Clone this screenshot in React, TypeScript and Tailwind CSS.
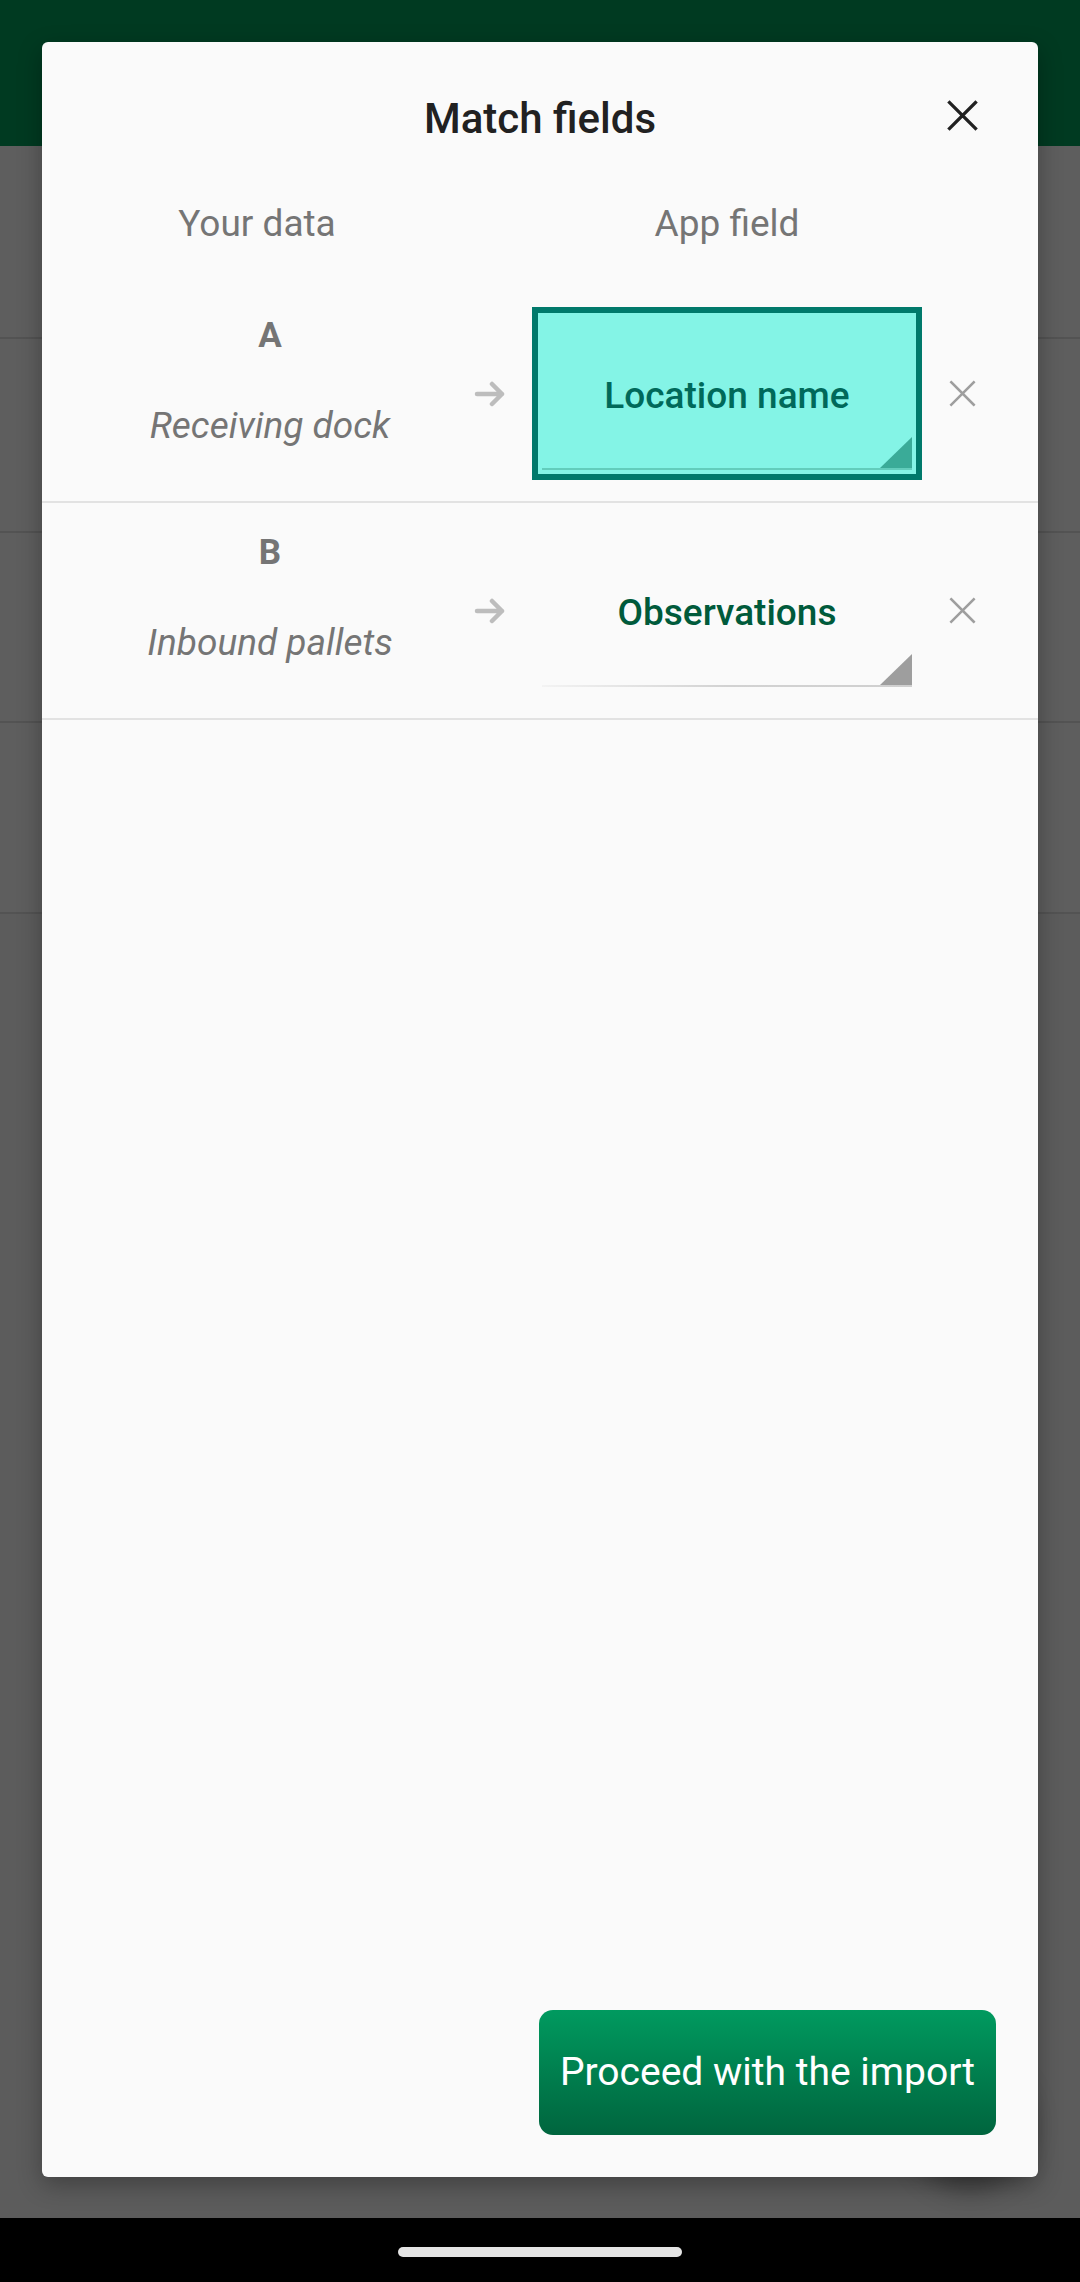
import React from "react";

const rows = [
  { letter: "A", sample: "Receiving dock", field: "Location name", focused: true },
  { letter: "B", sample: "Inbound pallets", field: "Observations", focused: false },
];

function CloseIcon({ className, strokeWidth }: { className: string; strokeWidth: number }) {
  return (
    <svg className={className} viewBox="0 0 24 24" fill="none" stroke="currentColor" strokeWidth={strokeWidth}>
      <path strokeLinecap="square" d="M2 2L22 22M22 2L2 22" />
    </svg>
  );
}

function ArrowIcon() {
  return (
    <svg className="w-[32px] h-[26px] text-[#bdbdbd]" viewBox="0 0 32 26" fill="none" stroke="currentColor" strokeWidth={4.5}>
      <path strokeLinecap="round" strokeLinejoin="round" d="M3 13H28M18 3L28 13L18 23" />
    </svg>
  );
}

function FieldSelect({ label, focused }: { label: string; focused: boolean }) {
  return (
    <div
      className={
        focused
          ? "relative w-[390px] h-[173px] border-[6px] border-[#00796b] bg-[#84f4e6] flex items-center justify-center"
          : "relative w-[390px] h-[173px] border-[6px] border-transparent flex items-center justify-center"
      }
    >
      <span
        className={
          focused
            ? "mt-[3px] text-[37px] font-medium text-[#00695a] leading-none"
            : "mt-[3px] text-[37px] font-medium text-[#005a3b] leading-none"
        }
      >
        {label}
      </span>
      <div
        className={
          focused
            ? "absolute left-[4px] right-[4px] bottom-[4px] h-[2px] bg-[#62cdbc]"
            : "absolute left-[4px] right-[4px] bottom-[4px] h-[2px] bg-gradient-to-r from-[#f3f3f3] via-[#d2d2d2] to-[#cfcfcf]"
        }
      />
      <svg className="absolute right-[4px] bottom-[6px] w-[32px] h-[31px]" viewBox="0 0 32 31">
        <polygon points="32,0 32,31 0,31" fill={focused ? "#3aab98" : "#9e9e9e"} />
      </svg>
    </div>
  );
}

export default function App() {
  return (
    <div
      className="relative w-[1080px] h-[2282px] overflow-hidden bg-[#5e5e5e]"
      style={{ fontFamily: "Roboto, 'Noto Sans', sans-serif" }}
    >
      {/* page behind the scrim */}
      <div className="flex flex-col h-full">
        <div className="h-[146px] bg-[#003a21]" />
        <div className="flex-1 flex flex-col">
          <div className="h-[193px] border-b-[2px] border-[#535353]" />
          <div className="h-[194px] border-b-[2px] border-[#535353]" />
          <div className="h-[190px] border-b-[2px] border-[#535353]" />
          <div className="h-[191px] border-b-[2px] border-[#535353]" />
          <div className="flex-1 bg-[#5c5c5c]" />
        </div>
        <div className="h-[64px] bg-black flex items-center justify-center">
          <div className="w-[284px] h-[10px] rounded-full bg-[#e4e4e4] mt-[4px]" />
        </div>
      </div>

      {/* fab under the dialog */}
      <div className="absolute left-[910px] top-[2050px] w-[120px] h-[125px] rounded-full bg-[#5a5a5a] shadow-[0_14px_26px_rgba(0,0,0,0.35)]" />

      {/* dialog */}
      <div className="absolute left-[42px] top-[42px] w-[996px] h-[2135px] rounded-[6px] bg-[#fafafa] shadow-[0_8px_24px_rgba(0,0,0,0.3)] flex flex-col">
        <div className="relative pt-[53px] pb-[19px] flex justify-center">
          <h1 className="text-[42px] leading-[48px] font-medium text-[#212121]">Match fields</h1>
          <button type="button" aria-label="Close" className="absolute right-[60px] top-[58px] text-[#212121]">
            <CloseIcon className="w-[31px] h-[31px]" strokeWidth={2.6} />
          </button>
        </div>

        <div className="h-[124px] flex items-center">
          <div className="w-[430px] text-center text-[37px] text-[#757575]">Your data</div>
          <div className="w-[60px]" />
          <div className="w-[390px] text-center text-[37px] text-[#757575]">App field</div>
        </div>

        {rows.map((r) => (
          <div key={r.letter} className="h-[217px] flex items-center border-b-[2px] border-[#e2e2e2]">
            <div className="self-start w-[432px] pl-[24px] pt-[29px] flex flex-col items-center text-[#757575]">
              <div className="text-[35px] leading-[42px] font-bold">{r.letter}</div>
              <div className="mt-[47px] text-[37px] leading-[44px] italic">{r.sample}</div>
            </div>
            <div className="w-[58px] flex items-center">
              <ArrowIcon />
            </div>
            <FieldSelect label={r.field} focused={r.focused} />
            <div className="pl-[27px] flex items-center text-[#9e9e9e]">
              <CloseIcon className="w-[27px] h-[27px]" strokeWidth={2.2} />
            </div>
          </div>
        ))}

        <div className="flex-1" />

        <div className="flex justify-end pr-[42px] pb-[42px]">
          <button
            type="button"
            className="w-[457px] h-[125px] rounded-[14px] bg-gradient-to-b from-[#009a5f] to-[#00653e] text-white text-[39px] leading-none flex items-center justify-center"
          >
            Proceed with the import
          </button>
        </div>
      </div>
    </div>
  );
}
